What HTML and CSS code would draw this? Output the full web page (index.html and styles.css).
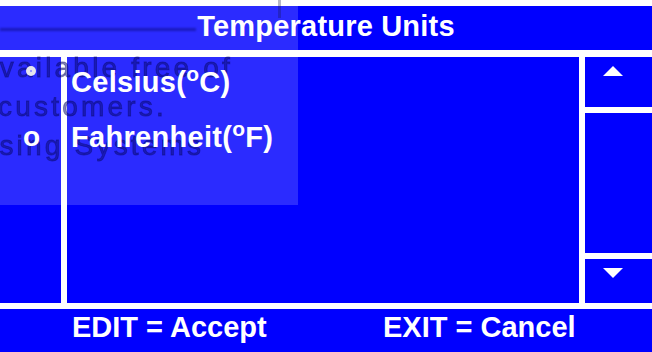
FILE: index.html
```html
<!DOCTYPE html>
<html lang="en">
<head>
  <meta charset="UTF-8">
  <title>Temperature Units</title>
  <link rel="stylesheet" href="styles.css">
</head>
<body>
<div class="screen">
  <div class="title"><span class="label">Temperature Units</span></div>
  <div class="panel">
    <div class="marks">
      <div class="mark label"><span class="dot"></span></div>
      <div class="mark label"><span class="ring">o</span></div>
    </div>
    <ul class="options">
      <li class="label">Celsius(<sup>o</sup>C)</li>
      <li class="label">Fahrenheit(<sup>o</sup>F)</li>
    </ul>
    <div class="scroll">
      <div class="scroll-btn"><span class="arrow up"></span></div>
      <div class="scroll-track"></div>
      <div class="scroll-btn"><span class="arrow down"></span></div>
    </div>
  </div>
  <div class="footer">
    <span>EDIT = Accept</span>
    <span>EXIT = Cancel</span>
  </div>
</div>

<!-- faint reflection of another window over the screen -->
<div class="ghost">
  <div class="ghost-rule"></div>
  <div class="ghost-edge"></div>
  <div class="ghost-text">
    <div class="line-1">available free of</div>
    <div class="line-2">customers.</div>
    <div class="line-3">Using Systems</div>
  </div>
</div>
</body>
</html>
```

FILE: styles.css
```css
html, body {
  margin: 0;
  padding: 0;
  width: 652px;
  height: 352px;
  overflow: hidden;
  background: #fff;
}
body {
  font-family: "Liberation Sans", Arial, sans-serif;
  font-weight: bold;
  font-size: 29px;
  color: #fff;
}
.label {
  position: relative;
  z-index: 2;
}
.screen {
  display: flex;
  flex-direction: column;
  padding-top: 6px;
}
.title {
  box-sizing: border-box;
  height: 44px;
  padding-bottom: 4px;
  line-height: 40px;
  text-align: center;
  letter-spacing: 0.2px;
  background: #0000ff;
}
.panel {
  margin-top: 7px;
  height: 246px;
  display: grid;
  grid-template-columns: 61px 512px 67px;
  column-gap: 6px;
}
.marks {
  background: #0000ff;
  padding-top: 9px;
}
.mark {
  height: 32px;
  line-height: 32px;
  margin-bottom: 23px;
  text-align: center;
}
.dot {
  display: inline-block;
  width: 10px;
  height: 10px;
  margin-left: 1px;
  border-radius: 50%;
  background: radial-gradient(circle, #9a9aff 0 1px, #e6e6ee 1.6px);
  vertical-align: 16px;
}
.ring {
  font-size: 28px;
  vertical-align: 4px;
  margin-left: 2px;
}
.options {
  list-style: none;
  margin: 0;
  padding: 9px 0 0 4px;
  background: #0000ff;
}
.options li {
  height: 32px;
  line-height: 32px;
  margin-bottom: 23px;
  letter-spacing: 0.3px;
}
.options sup {
  font-size: 21px;
  line-height: 0;
  vertical-align: 11px;
}
.scroll {
  display: grid;
  grid-template-rows: 50px 140px 44px;
  row-gap: 6px;
}
.scroll-btn {
  background: #0000ff;
  padding: 9px 0 0 18px;
}
.scroll-track {
  background: #0000ff;
}
.arrow {
  display: block;
  width: 0;
  height: 0;
  border-left: 10px solid transparent;
  border-right: 10px solid transparent;
}
.arrow.up {
  border-bottom: 10px solid #fff;
}
.arrow.down {
  border-top: 10px solid #fff;
}
.footer {
  box-sizing: border-box;
  margin-top: 6px;
  height: 43px;
  padding: 0 0 6px 72px;
  line-height: 37px;
  display: grid;
  grid-template-columns: 311px auto;
  background: #0000ff;
}
.ghost {
  position: absolute;
  top: 0;
  left: 0;
  z-index: 1;
  width: 298px;
  height: 205px;
  overflow: hidden;
  background: rgba(255, 255, 255, 0.17);
  pointer-events: none;
}
.ghost-rule {
  position: absolute;
  top: 28px;
  left: 0;
  width: 196px;
  height: 3px;
  background: rgba(0, 0, 90, 0.4);
  filter: blur(0.8px);
}
.ghost-edge {
  position: absolute;
  top: 0;
  left: 278px;
  width: 3px;
  height: 18px;
  background: rgba(20, 20, 70, 0.3);
  filter: blur(0.6px);
}
.ghost-text {
  padding-top: 48px;
  font-weight: normal;
  font-size: 28px;
  line-height: 39px;
  letter-spacing: 3.2px;
  white-space: nowrap;
  color: rgba(10, 10, 110, 0.5);
  -webkit-text-stroke: 0.8px rgba(10, 10, 110, 0.5);
  filter: blur(0.7px);
}
.line-1 {
  margin-left: -19px;
}
.line-2 {
  margin-left: -2px;
}
.line-3 {
  margin-left: -24px;
}
```
